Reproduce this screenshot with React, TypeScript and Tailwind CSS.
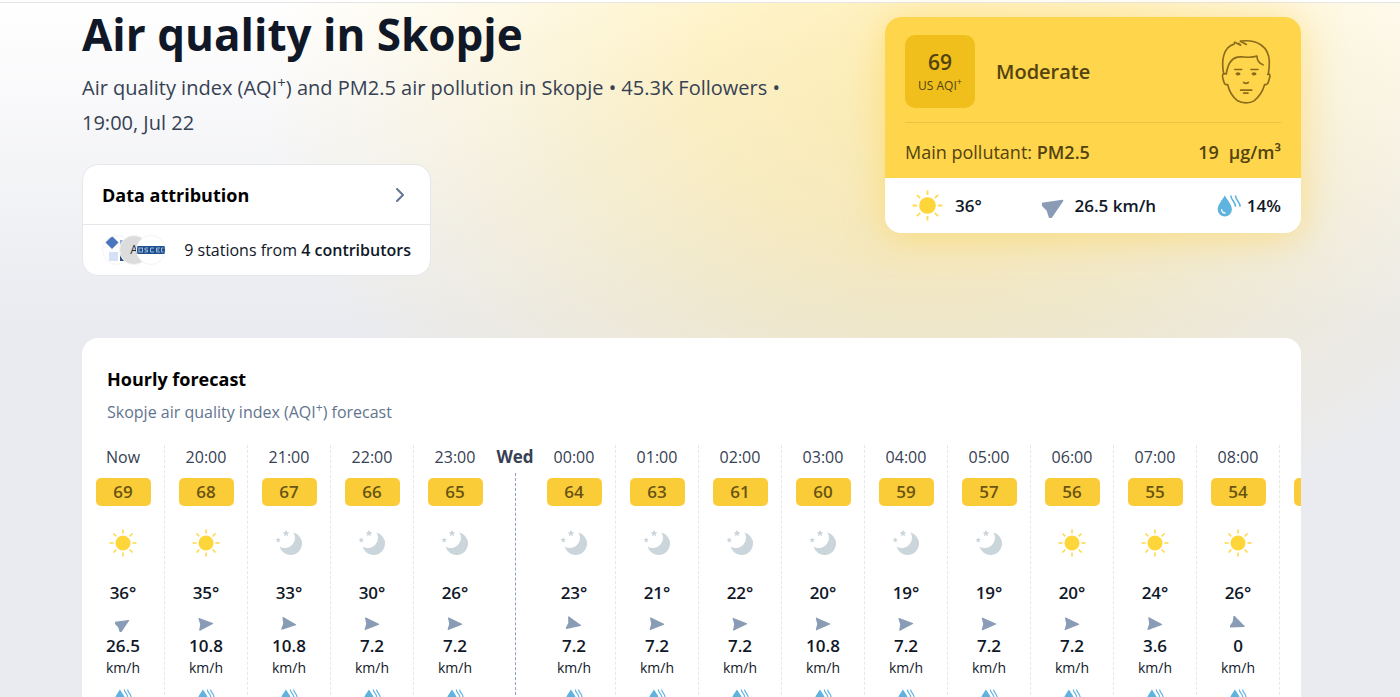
import React from "react"

import { ChevronRight } from "lucide-react"
import clsx from "clsx"

interface Hour {
    time: string
    aqi: number
    weather: "sun" | "moon"
    temp: number
    wind: string
    angle: number
    newDay?: string
}

const HOURS: Hour[] = [
    { time: "Now", aqi: 69, weather: "sun", temp: 36, wind: "26.5", angle: -32 },
    { time: "20:00", aqi: 68, weather: "sun", temp: 35, wind: "10.8", angle: -4 },
    { time: "21:00", aqi: 67, weather: "moon", temp: 33, wind: "10.8", angle: 6 },
    { time: "22:00", aqi: 66, weather: "moon", temp: 30, wind: "7.2", angle: 2 },
    { time: "23:00", aqi: 65, weather: "moon", temp: 26, wind: "7.2", angle: 2 },
    { time: "00:00", aqi: 64, weather: "moon", temp: 23, wind: "7.2", angle: 12, newDay: "Wed" },
    { time: "01:00", aqi: 63, weather: "moon", temp: 21, wind: "7.2", angle: 2 },
    { time: "02:00", aqi: 61, weather: "moon", temp: 22, wind: "7.2", angle: -2 },
    { time: "03:00", aqi: 60, weather: "moon", temp: 20, wind: "10.8", angle: 0 },
    { time: "04:00", aqi: 59, weather: "moon", temp: 19, wind: "7.2", angle: -4 },
    { time: "05:00", aqi: 57, weather: "moon", temp: 19, wind: "7.2", angle: 0 },
    { time: "06:00", aqi: 56, weather: "sun", temp: 20, wind: "7.2", angle: 2 },
    { time: "07:00", aqi: 55, weather: "sun", temp: 24, wind: "3.6", angle: 4 },
    { time: "08:00", aqi: 54, weather: "sun", temp: 26, wind: "0", angle: 22 },
    { time: "09:00", aqi: 53, weather: "sun", temp: 28, wind: "3.6", angle: 10 },
]

function SunIcon({ className }: { className?: string }) {
    return (
        <svg viewBox="0 0 32 32" className={className} aria-hidden="true">
            <circle cx="16" cy="16" r="8.6" fill="#fed639" />
            <g stroke="#fedb55" strokeWidth="1.9">
                {[0, 45, 90, 135, 180, 225, 270, 315].map((a) => (
                    <path key={a} d="M16 0.6V5.2" transform={`rotate(${a} 16 16)`} />
                ))}
            </g>
        </svg>
    )
}

function MoonIcon({ className }: { className?: string }) {
    return (
        <svg viewBox="0 0 28 28" className={className} fill="#cbd5dc" aria-hidden="true">
            <path d="M18.4 3.6A11.4 11.4 0 1 1 4.6 17.4A10 10 0 0 0 18.4 3.6Z" />
            <path d="M11 0.8L12 3.1L14.3 3.4L12.500 4.9L13.1 7.3L11 6.1L8.9 7.3L9.500 4.9L7.7 3.4L10 3.1Z" />
            <path d="M3.2 8.2L4 10L5.8 10.2L4.4 11.500L4.9 13.500L3.2 12.400L1.500 13.500L2 11.500L0.6 10.2L2.400 10Z" />
        </svg>
    )
}

function WindArrow({ angle, className }: { angle: number; className?: string }) {
    return (
        <svg viewBox="0 0 16 16" className={className} aria-hidden="true">
            <path
                d="M1.4 2.2L14.6 8L1.4 13.8L2.8 8Z"
                fill="#8a9cb5"
                stroke="#8a9cb5"
                strokeWidth="1.2"
                strokeLinejoin="round"
                transform={`rotate(${angle} 8 8)`}
            />
        </svg>
    )
}

function HumidityIcon({ className }: { className?: string }) {
    return (
        <svg viewBox="0 0 24 22" className={className} aria-hidden="true">
            <path d="M7.8 0.6C9.6 4 14.9 9.6 14.9 14.4A7.1 7.1 0 0 1 0.7 14.4C0.7 9.6 6 4 7.8 0.6Z" fill="#5fb3df" />
            <path d="M4.6 14.6A3.4 3.4 0 0 0 8 18" fill="none" stroke="#fff" strokeWidth="1.3" strokeLinecap="round" />
            <g fill="none" stroke="#5fb3df" strokeWidth="1.6">
                <path d="M13.8 0.6C13.8 5 18.4 6.4 18.6 11.6" />
                <path d="M18.4 0.6C18.4 5 23 6.4 23.2 11.6" />
            </g>
        </svg>
    )
}

function FaceIcon() {
    return (
        <svg
            viewBox="60 22 156 200"
            className="h-[67px] w-[52px]"
            fill="none"
            stroke="#8c6c1a"
            strokeWidth="5"
            strokeLinecap="round"
            strokeLinejoin="round"
            role="img"
            aria-label="Moderate"
        >
            <path d="M71 129C64 92 68 50 102 40L104 34L122 43L116 38" />
            <path d="M139 41L121 31C172 24 207 48 208 92C208 106 207 118 205 129" />
            <path d="M79 128C84 100 92 84 112 79C130 75 144 84 171 76C171 88 178 97 189 102" />
            <path d="M79 129C68 126 65 133 69 144C72 154 73 164 83 161C88 184 101 201 113 210C126 218 150 218 162 210C175 200 188 182 194 161C203 164 205 154 208 144C212 132 209 128 203 131" />
            <path d="M104 116H125M153 116H174M131 155C135 158 141 158 145 155M122 178H155M131 187H144" />
            <ellipse cx="114" cy="129" rx="5" ry="2.5" fill="#8c6c1a" />
            <ellipse cx="162" cy="129" rx="5" ry="2.5" fill="#8c6c1a" />
        </svg>
    )
}

function Contributors() {
    const circle = "flex size-[30px] items-center justify-center overflow-hidden rounded-full border border-gray-100"
    return (
        <div className="flex -space-x-[13px]">
            <span className={clsx(circle, "bg-white")}>
                <svg viewBox="0 0 30 30" className="size-[30px] shrink-0" aria-hidden="true">
                    <path d="M10 1L16.5 7.5L10 14L3.5 7.5Z" fill="#4a76bd" />
                    <rect x="18" y="5" width="8" height="8" fill="#8fb0e0" />
                    <rect x="7" y="17" width="9" height="9" fill="#d6e1f5" />
                    <rect x="18" y="17" width="8" height="9" fill="#2f4f87" />
                </svg>
            </span>
            <span className={clsx(circle, "bg-[#dcdcdc] text-xs text-gray-800")}>A</span>
            <span className={clsx(circle, "bg-white")}>
                <svg viewBox="0 0 30 30" className="size-[30px] shrink-0" aria-hidden="true">
                    <rect x="1" y="11" width="28" height="8" fill="#1d4f8f" />
                    <g fill="none" stroke="#9fb6d6" strokeWidth="1">
                        <rect x="3" y="13" width="3.5" height="4" />
                        <path d="M12 13H9V15H11.5V17H8.5M18 13H14.5V17H18M24 13H20.5V17H24M20.5 15H23M27.5 13H25.5V17H27.5" />
                    </g>
                </svg>
            </span>
        </div>
    )
}

function AqiCard() {
    return (
        <section className="w-[416px] shrink-0 self-start overflow-hidden rounded-2xl bg-white shadow-[0_4px_36px_rgba(255,205,60,0.5)]">
            <div className="bg-[#ffd54b] px-5 pt-[18px] text-[#52430f]">
                <div className="flex items-center border-b border-[#e9c343] pb-[14px]">
                    <div className="flex h-[73px] w-[70px] flex-col items-center justify-center rounded-[10px] bg-[#f0bf1c]">
                        <span className="text-[21px] leading-7 font-semibold">69</span>
                        <span className="text-xs leading-5">
                            US AQI<sup>+</sup>
                        </span>
                    </div>
                    <span className="ml-[21px] text-xl font-semibold">Moderate</span>
                    <div className="mr-[9px] ml-auto">
                        <FaceIcon />
                    </div>
                </div>
                <div className="flex h-[55px] items-center justify-between pt-0.5 text-lg">
                    <span>
                        Main pollutant: <b className="font-semibold">PM2.5</b>
                    </span>
                    <span className="flex gap-[10px] font-semibold">
                        <span>19</span>
                        <span>µg/m³</span>
                    </span>
                </div>
            </div>
            <div className="flex h-[55px] items-center justify-between pr-5 pl-[27px] text-[17px] font-semibold text-gray-900">
                <span className="flex items-center gap-3">
                    <SunIcon className="size-[31px]" />
                    36°
                </span>
                <span className="flex items-center gap-2">
                    <WindArrow angle={-32} className="size-6" />
                    26.5 km/h
                </span>
                <span className="flex items-center gap-[6px]">
                    <HumidityIcon className="h-[22px] w-6" />
                    14%
                </span>
            </div>
        </section>
    )
}

function HourColumn({ hour, last }: { hour: Hour; last: boolean }) {
    return (
        <li
            className={clsx(
                "flex w-[83px] shrink-0 flex-col items-center text-gray-900",
                "border-r border-dashed",
                last ? "border-transparent" : "border-gray-200"
            )}
        >
            <span className="text-base leading-6 text-gray-700">{hour.time}</span>
            <span className="mt-[9px] w-[55px] rounded-[5px] bg-[#facd38] text-center text-[17px] leading-7 font-semibold text-[#6a5412]">
                {hour.aqi}
            </span>
            {hour.weather === "sun" ? (
                <SunIcon className="mt-[23px] size-7" />
            ) : (
                <MoonIcon className="mt-[23px] size-7" />
            )}
            <span className="mt-6 text-[17px] leading-6 font-semibold">{hour.temp}°</span>
            <WindArrow angle={hour.angle} className="mt-[11px] size-4" />
            <span className="mt-[2px] text-[17px] leading-6 font-semibold">{hour.wind}</span>
            <span className="text-sm leading-5">km/h</span>
            <HumidityIcon className="mt-[11px] h-4 w-[18px]" />
        </li>
    )
}

export default function App() {
    return (
        <main className="relative h-screen overflow-hidden bg-[linear-gradient(180deg,#ffffff_0px,#eaebf0_320px)] font-['Open_Sans','Noto_Sans',sans-serif]">
            <div className="absolute inset-0 bg-[radial-gradient(ellipse_670px_460px_at_930px_100px,rgba(255,220,90,0.45)_0%,rgba(255,220,95,0.34)_35%,rgba(252,222,110,0.16)_68%,rgba(250,225,120,0)_100%)]" />
            <div className="relative">
                <div className="h-[3px] border-b border-black/10 bg-white" />
                <div className="pr-[99px] pl-[82px]">
                    <header className="flex justify-between pt-[14px]">
                        <div className="max-w-[730px] min-w-0">
                            <h1 className="-mt-[10px] text-[44px] leading-[54px] font-bold text-gray-900">
                                Air quality in Skopje
                            </h1>
                            <p className="mt-[9px] text-xl leading-[35px] text-gray-700">
                                Air quality index (AQI<sup>+</sup>) and PM2.5 air pollution in Skopje • 45.3K Followers • 19:00, Jul 22
                            </p>
                            <button className="mt-6 block w-[349px] rounded-2xl border border-gray-200 bg-white text-left">
                                <span className="flex h-[60px] items-center justify-between border-b border-gray-200 pr-[18px] pl-[19px]">
                                    <span className="text-lg font-bold text-black">Data attribution</span>
                                    <ChevronRight className="size-6 text-slate-500" strokeWidth={2} />
                                </span>
                                <span className="flex h-[50px] items-center justify-between pr-[19px] pl-[19px]">
                                    <Contributors />
                                    <span className="text-base text-gray-900">
                                        9 stations from <b className="font-semibold">4 contributors</b>
                                    </span>
                                </span>
                            </button>
                        </div>
                        <AqiCard />
                    </header>

                    <section className="mt-[62px] overflow-hidden rounded-2xl bg-white pt-[27px]">
                        <h2 className="px-[25px] text-lg leading-7 font-bold text-black">Hourly forecast</h2>
                        <p className="mt-[5px] px-[25px] text-base leading-7 text-slate-500">
                            Skopje air quality index (AQI<sup>+</sup>) forecast
                        </p>
                        <ul className="mt-[19px] flex overflow-hidden pb-8">
                            {HOURS.map((hour, i) => (
                                <React.Fragment key={hour.time}>
                                    {hour.newDay && (
                                        <li className="flex w-9 shrink-0 flex-col items-center">
                                            <span className="text-[17px] leading-6 font-bold text-gray-700">{hour.newDay}</span>
                                            <span className="mt-1 flex-1 border-l border-dashed border-slate-400" />
                                        </li>
                                    )}
                                    <HourColumn hour={hour} last={!!HOURS[i + 1]?.newDay} />
                                </React.Fragment>
                            ))}
                        </ul>
                    </section>
                </div>
            </div>
        </main>
    )
}
